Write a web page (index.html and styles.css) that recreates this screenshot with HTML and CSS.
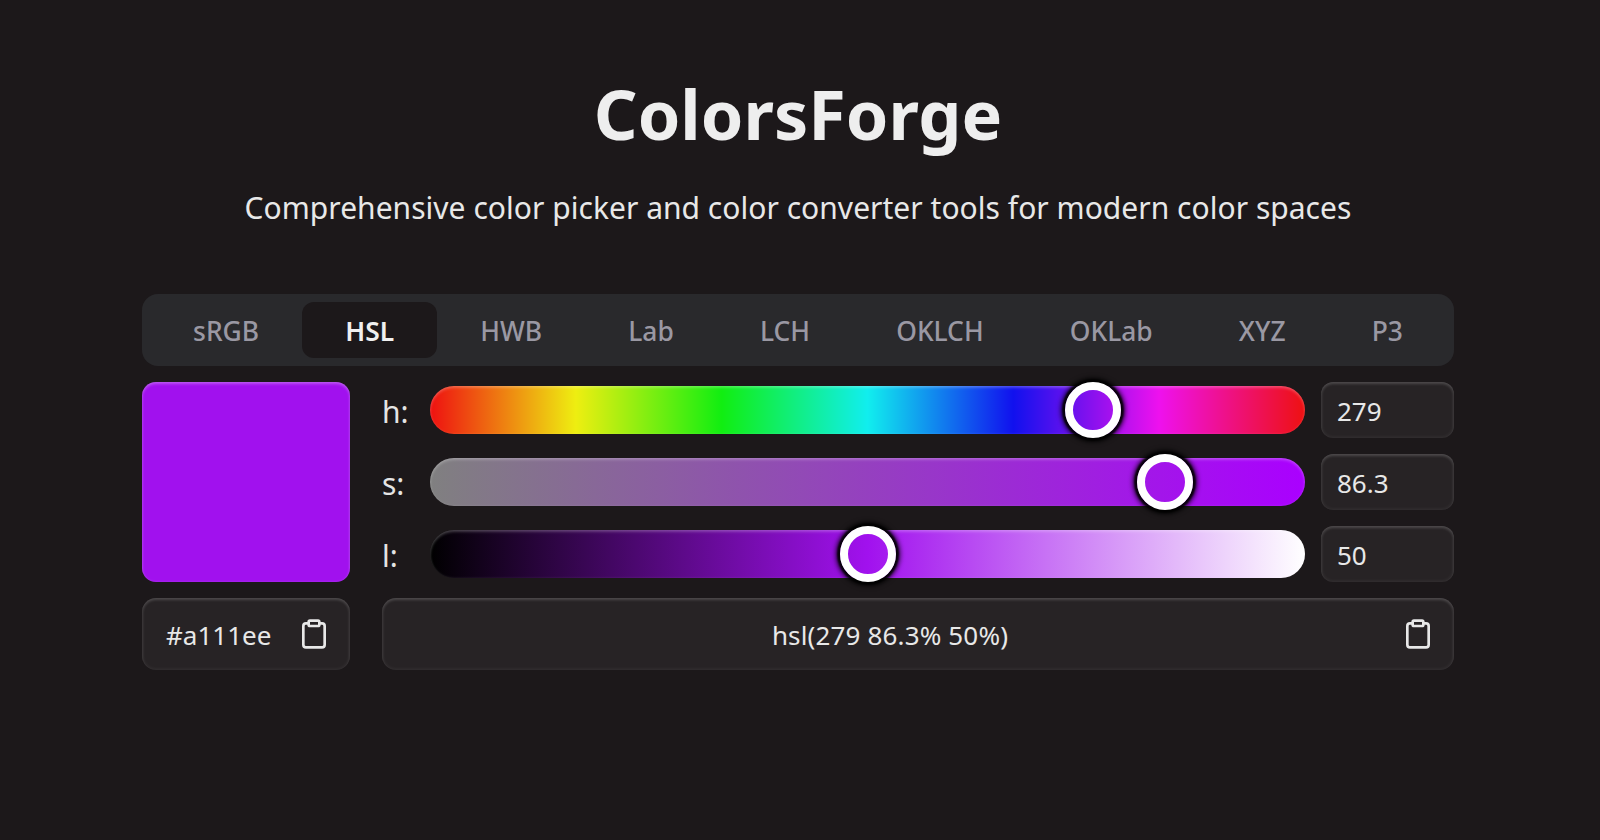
FILE: index.html
```html
<!DOCTYPE html>
<html lang="en">
<head>
<meta charset="utf-8">
<title>ColorsForge</title>
<link rel="stylesheet" href="styles.css">
</head>
<body>
<main class="page">
  <header class="header">
    <h1 class="title">ColorsForge</h1>
    <p class="subtitle">Comprehensive color picker and color converter tools for modern color spaces</p>
  </header>
  <nav class="tabs">
    <button class="tab">sRGB</button>
    <button class="tab tab-active">HSL</button>
    <button class="tab">HWB</button>
    <button class="tab">Lab</button>
    <button class="tab">LCH</button>
    <button class="tab">OKLCH</button>
    <button class="tab">OKLab</button>
    <button class="tab">XYZ</button>
    <button class="tab">P3</button>
  </nav>
  <section class="picker">
    <div class="swatch"></div>
    <div class="sliders">
      <div class="row">
        <span class="label">h:</span>
        <div class="track track-h"><span class="thumb" style="left:634.7px"></span></div>
        <div class="value">279</div>
      </div>
      <div class="row">
        <span class="label">s:</span>
        <div class="track track-s"><span class="thumb" style="left:706.8px"></span></div>
        <div class="value">86.3</div>
      </div>
      <div class="row">
        <span class="label">l:</span>
        <div class="track track-l"><span class="thumb" style="left:409.5px"></span></div>
        <div class="value">50</div>
      </div>
    </div>
  </section>
  <section class="outputs">
    <div class="output output-hex">
      <span class="output-text">#a111ee</span>
      <svg class="copy" viewBox="0 0 24 24" fill="none" stroke="currentColor" stroke-width="2" stroke-linecap="round" stroke-linejoin="round"><rect x="8" y="2" width="8" height="4" rx="1"/><path d="M16 4h2a2 2 0 0 1 2 2v14a2 2 0 0 1-2 2H6a2 2 0 0 1-2-2V6a2 2 0 0 1 2-2h2"/></svg>
    </div>
    <div class="output output-css">
      <span class="output-text output-center">hsl(279 86.3% 50%)</span>
      <svg class="copy" viewBox="0 0 24 24" fill="none" stroke="currentColor" stroke-width="2" stroke-linecap="round" stroke-linejoin="round"><rect x="8" y="2" width="8" height="4" rx="1"/><path d="M16 4h2a2 2 0 0 1 2 2v14a2 2 0 0 1-2 2H6a2 2 0 0 1-2-2V6a2 2 0 0 1 2-2h2"/></svg>
    </div>
  </section>
</main>
</body>
</html>
```
FILE: styles.css
```css
* { box-sizing: border-box; }
html, body { margin: 0; height: 100%; }
body {
  background: #1c181a;
  color: #f0f0f0;
  font-family: "Noto Sans", "Open Sans", sans-serif;
  overflow: hidden;
}
.page {
  width: 1312px;
  margin-left: 142px;
  padding-top: 66px;
}
.header { text-align: center; }
.title {
  margin: 0;
  font-size: 68.3px;
  font-weight: 700;
  line-height: 96px;
  color: #eeeeee;
}
.subtitle {
  margin: 22px 0 0;
  font-size: 30px;
  letter-spacing: .03px;
  line-height: 48px;
  color: #e8e8e8;
}
.tabs {
  display: flex;
  height: 72px;
  margin-top: 62px;
  padding: 8px;
  background: #29292c;
  border-radius: 16px;
}
.tab {
  flex: 1 1 auto;
  padding: 2px 40px 0;
  border: 0;
  border-radius: 12px;
  background: transparent;
  color: #9a98a3;
  font: 500 26.4px "Noto Sans", "Open Sans", sans-serif;
}
.tab-active { background: #1c181a; color: #f0f0f0; font-weight: 600; }
.picker {
  display: flex;
  gap: 32px;
  margin-top: 16px;
}
.swatch {
  flex: 0 0 208px;
  height: 200px;
  border-radius: 14px;
  background: #a111ee;
  box-shadow: inset 0 2px 3px rgba(255,255,255,.25), inset 0 0 3px rgba(255,255,255,.15);
}
.sliders {
  flex: 1;
  display: flex;
  flex-direction: column;
  gap: 16px;
}
.row {
  display: flex;
  align-items: center;
  height: 56px;
}
.label {
  flex: 0 0 48px;
  padding-top: 2px;
  font-size: 30px;
  color: #e4e4e4;
}
.track {
  position: relative;
  flex: 0 0 875px;
  height: 48px;
  border-radius: 24px;
  box-shadow: inset 0 2px 3px rgba(255,255,255,.22), inset 0 0 3px rgba(255,255,255,.1);
}
.track-h { background: linear-gradient(to right, #ee1111, #eeee11, #11ee11, #11eeee, #1111ee, #ee11ee, #ee1111); }
.track-s { background: linear-gradient(to right, #808080, #aa00ff); }
.track-l { background: linear-gradient(to right, #000000, #a111ee, #ffffff); }
.thumb {
  position: absolute;
  top: -4px;
  width: 56px;
  height: 56px;
  border: 8px solid #fff;
  border-radius: 50%;
  box-shadow: 0 0 2px 3px rgba(0,0,0,.9), 0 0 4px 5px rgba(0,0,0,.55);
}
.value {
  flex: 0 0 133px;
  height: 56px;
  margin-left: 16px;
  padding: 2px 16px 0;
  border-radius: 12px;
  background: #272325;
  box-shadow: inset 0 2px 3px rgba(255,255,255,.14), inset 0 0 4px rgba(255,255,255,.1);
  font-size: 26px;
  line-height: 54px;
  color: #e8e8e8;
}
.outputs {
  display: flex;
  gap: 32px;
  margin-top: 16px;
}
.output {
  display: flex;
  align-items: center;
  height: 72px;
  padding: 0 20px 0 24px;
  border-radius: 14px;
  background: #272325;
  box-shadow: inset 0 2px 3px rgba(255,255,255,.14), inset 0 0 4px rgba(255,255,255,.1);
  font-size: 26px;
  color: #e8e8e8;
}
.output-text { padding-top: 2px; }
.output-hex { flex: 0 0 208px; justify-content: space-between; }
.output-css { flex: 1; }
.output-center { flex: 1; margin-right: 28px; text-align: center; letter-spacing: .15px; }
.copy { flex: 0 0 32px; width: 32px; height: 32px; color: #e8e8e8; }
```
